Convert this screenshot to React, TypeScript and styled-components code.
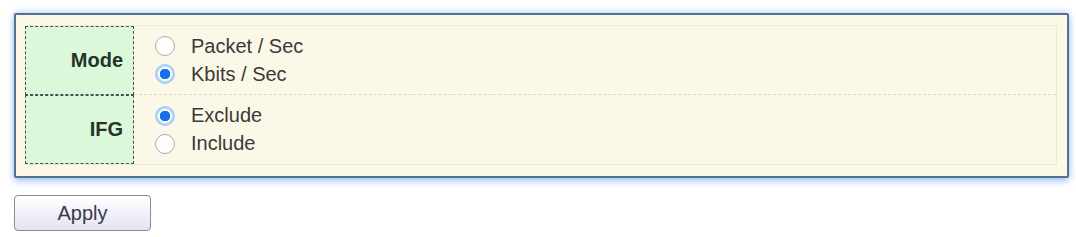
import React, { useState } from "react";
import styled, { createGlobalStyle } from "styled-components";

const GlobalStyle = createGlobalStyle`
  body {
    margin: 0;
    background: #ffffff;
    font-family: "Liberation Sans", Arial, sans-serif;
  }
`;

const Page = styled.div`
  padding: 13px 7px 0 14px;
`;

const Panel = styled.div`
  box-sizing: border-box;
  width: 1055px;
  border: 2px solid #52728f;
  border-radius: 2px;
  background: #fcf8e8;
  box-shadow: 0 3px 7px rgba(90, 150, 230, 0.55), 0 -2px 6px rgba(140, 180, 230, 0.35);
  padding: 10px 10px 11px 9px;
`;

const Table = styled.div`
  border: 1px solid #f1ead2;
  border-left: none;
  display: flex;
  flex-direction: column;
`;

const Row = styled.div`
  display: flex;
  height: 69px;
`;

const Label = styled.div`
  width: 109px;
  flex: none;
  box-sizing: border-box;
  border: 1.5px dashed #3e5258;
  background: #dcf8da;
  display: flex;
  align-items: center;
  justify-content: flex-end;
  padding-right: 10px;
  font-weight: bold;
  font-size: 20px;
  color: #26332b;
`;

const Values = styled.div<{ $divider?: boolean }>`
  flex: 1;
  display: flex;
  flex-direction: column;
  justify-content: center;
  padding-left: 21px;
  border-bottom: ${({ $divider }) => ($divider ? "1px dashed #dcd8cc" : "none")};
`;

const Option = styled.label`
  display: flex;
  align-items: center;
  height: 28px;
  font-size: 20px;
  color: #3a3a3a;
  cursor: pointer;
`;

const Radio = styled.input`
  appearance: none;
  margin: 0 16px 0 0;
  width: 20px;
  height: 20px;
  border-radius: 50%;
  box-sizing: border-box;
  border: 1.5px solid #aaaaaa;
  background: #ffffff;
  &:checked {
    border: 2px solid #a6cdf5;
    background: radial-gradient(circle, #1670ea 0 5px, #ffffff 5.5px 6.5px, #cde3fa 7px);
  }
`;

const ApplyButton = styled.button`
  margin-top: 17px;
  width: 137px;
  height: 36px;
  border: 1px solid #8c8c8c;
  border-radius: 4px;
  background: linear-gradient(#ffffff, #e6e2f6);
  font-family: "Liberation Sans", Arial, sans-serif;
  font-size: 20px;
  color: #3a3a4a;
`;

const App = () => {
  const [mode, setMode] = useState("kbits");
  const [ifg, setIfg] = useState("exclude");

  return (
    <Page>
      <GlobalStyle />
      <Panel>
        <Table>
          <Row>
            <Label>Mode</Label>
            <Values $divider>
              <Option>
                <Radio type="radio" name="mode" checked={mode === "packet"} onChange={() => setMode("packet")} />
                Packet / Sec
              </Option>
              <Option>
                <Radio type="radio" name="mode" checked={mode === "kbits"} onChange={() => setMode("kbits")} />
                Kbits / Sec
              </Option>
            </Values>
          </Row>
          <Row>
            <Label>IFG</Label>
            <Values>
              <Option>
                <Radio type="radio" name="ifg" checked={ifg === "exclude"} onChange={() => setIfg("exclude")} />
                Exclude
              </Option>
              <Option>
                <Radio type="radio" name="ifg" checked={ifg === "include"} onChange={() => setIfg("include")} />
                Include
              </Option>
            </Values>
          </Row>
        </Table>
      </Panel>
      <ApplyButton>Apply</ApplyButton>
    </Page>
  );
};

export default App;
